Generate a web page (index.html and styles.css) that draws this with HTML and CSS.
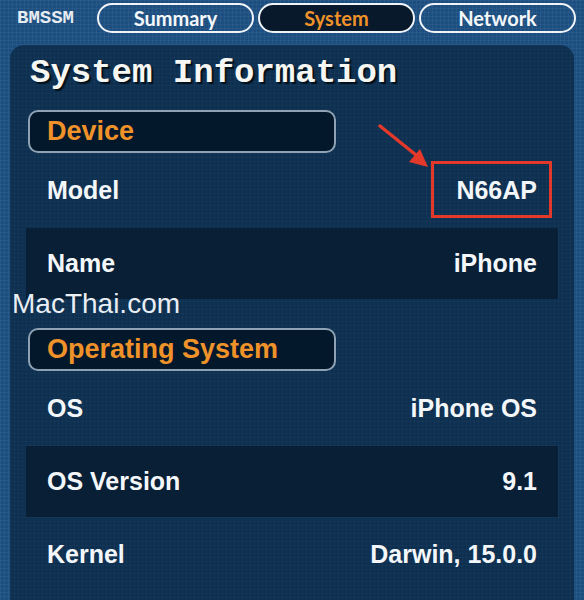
FILE: index.html
```html
<!DOCTYPE html>
<html lang="en">
<head>
    <meta charset="UTF-8">
    <title>BMSSM - System</title>
    <link rel="stylesheet" href="styles.css">
</head>
<body>
    <nav class="topBar">
        <div class="brand">BMSSM</div>
        <div class="tab">Summary</div>
        <div class="tab active">System</div>
        <div class="tab">Network</div>
    </nav>

    <div class="panel">
        <h1 class="title">System Information</h1>

        <div class="section">Device</div>
        <div class="row">
            <span>Model</span>
            <span class="mark">N66AP
                <svg class="arrow" width="54" height="46" viewBox="0 0 54 46">
                    <line x1="2" y1="2" x2="38" y2="31" stroke="#e2392a" stroke-width="3.5" stroke-linecap="round"/>
                    <polygon points="50,43 31,38 42,25" fill="#e2392a"/>
                </svg>
            </span>
        </div>
        <div class="row dark">
            <span>Name</span>
            <span>iPhone</span>
        </div>

        <div class="section gap">Operating System</div>
        <div class="row">
            <span>OS</span>
            <span>iPhone OS</span>
        </div>
        <div class="row dark">
            <span>OS Version</span>
            <span>9.1</span>
        </div>
        <div class="row">
            <span>Kernel</span>
            <span>Darwin, 15.0.0</span>
        </div>
    </div>

    <div class="watermark">MacThai.com</div>
</body>
</html>
```

FILE: styles.css
```css
body {
    margin: 0;
    height: 600px;
    overflow: hidden;
    position: relative;
    background-color: #1c4f80;
    background-image:
        linear-gradient(rgba(255, 255, 255, 0.04) 1px, transparent 1px),
        linear-gradient(90deg, rgba(255, 255, 255, 0.04) 1px, transparent 1px);
    background-size: 4px 4px;
    font-family: "Liberation Sans", Arial, sans-serif;
    color: #f4f7fa;
}

.topBar {
    display: flex;
    align-items: center;
    height: 36px;
    padding-left: 17px;
}

.brand {
    font-family: "Liberation Mono", monospace;
    font-weight: 700;
    font-size: 19px;
    color: #e6ecf2;
    width: 80px;
}

.tab {
    box-sizing: border-box;
    width: 157px;
    height: 30px;
    margin-right: 4px;
    border: 2.5px solid #f0f4f8;
    border-radius: 15px;
    display: flex;
    align-items: center;
    justify-content: center;
    font-family: Lato, sans-serif;
    font-weight: 700;
    font-size: 20px;
    color: #f4f7fa;
}

.tab.active {
    background-color: #07192b;
    color: #f0922a;
}

.panel {
    margin: 9px 10px 0;
    height: 600px;
    padding: 6px 16px 0;
    border-radius: 14px;
    background-color: #0d2f50;
    background-image:
        linear-gradient(rgba(255, 255, 255, 0.025) 1px, transparent 1px),
        linear-gradient(90deg, rgba(255, 255, 255, 0.025) 1px, transparent 1px);
    background-size: 4px 4px;
}

.title {
    margin: 0 0 15px 4px;
    height: 44px;
    line-height: 44px;
    font-family: "Liberation Mono", monospace;
    font-weight: 700;
    font-size: 34px;
    color: #f6f6f2;
    text-shadow: 2px 2px 1px #02101c;
}

.section {
    box-sizing: border-box;
    width: 308px;
    height: 43px;
    margin-left: 2px;
    padding-left: 17px;
    border: 2px solid #8ea2b4;
    border-radius: 10px;
    background-color: #04182b;
    display: flex;
    align-items: center;
    font-weight: 700;
    font-size: 27px;
    color: #f0922a;
}

.section.gap {
    margin-top: 29px;
}

.row {
    display: flex;
    justify-content: space-between;
    align-items: center;
    height: 71px;
    margin-top: 2px;
    padding: 0 21px;
    font-weight: 700;
    font-size: 25px;
}

.row.dark {
    background-color: #081f36;
}

.mark {
    position: relative;
}

.mark::after {
    content: '';
    position: absolute;
    top: -15px;
    bottom: -13px;
    left: -25px;
    right: -15px;
    border: 3px solid #e2392a;
}

.arrow {
    position: absolute;
    left: -78px;
    top: -52px;
}

.watermark {
    position: absolute;
    left: 12px;
    top: 288px;
    font-size: 28px;
    color: #e8eef3;
}
```
